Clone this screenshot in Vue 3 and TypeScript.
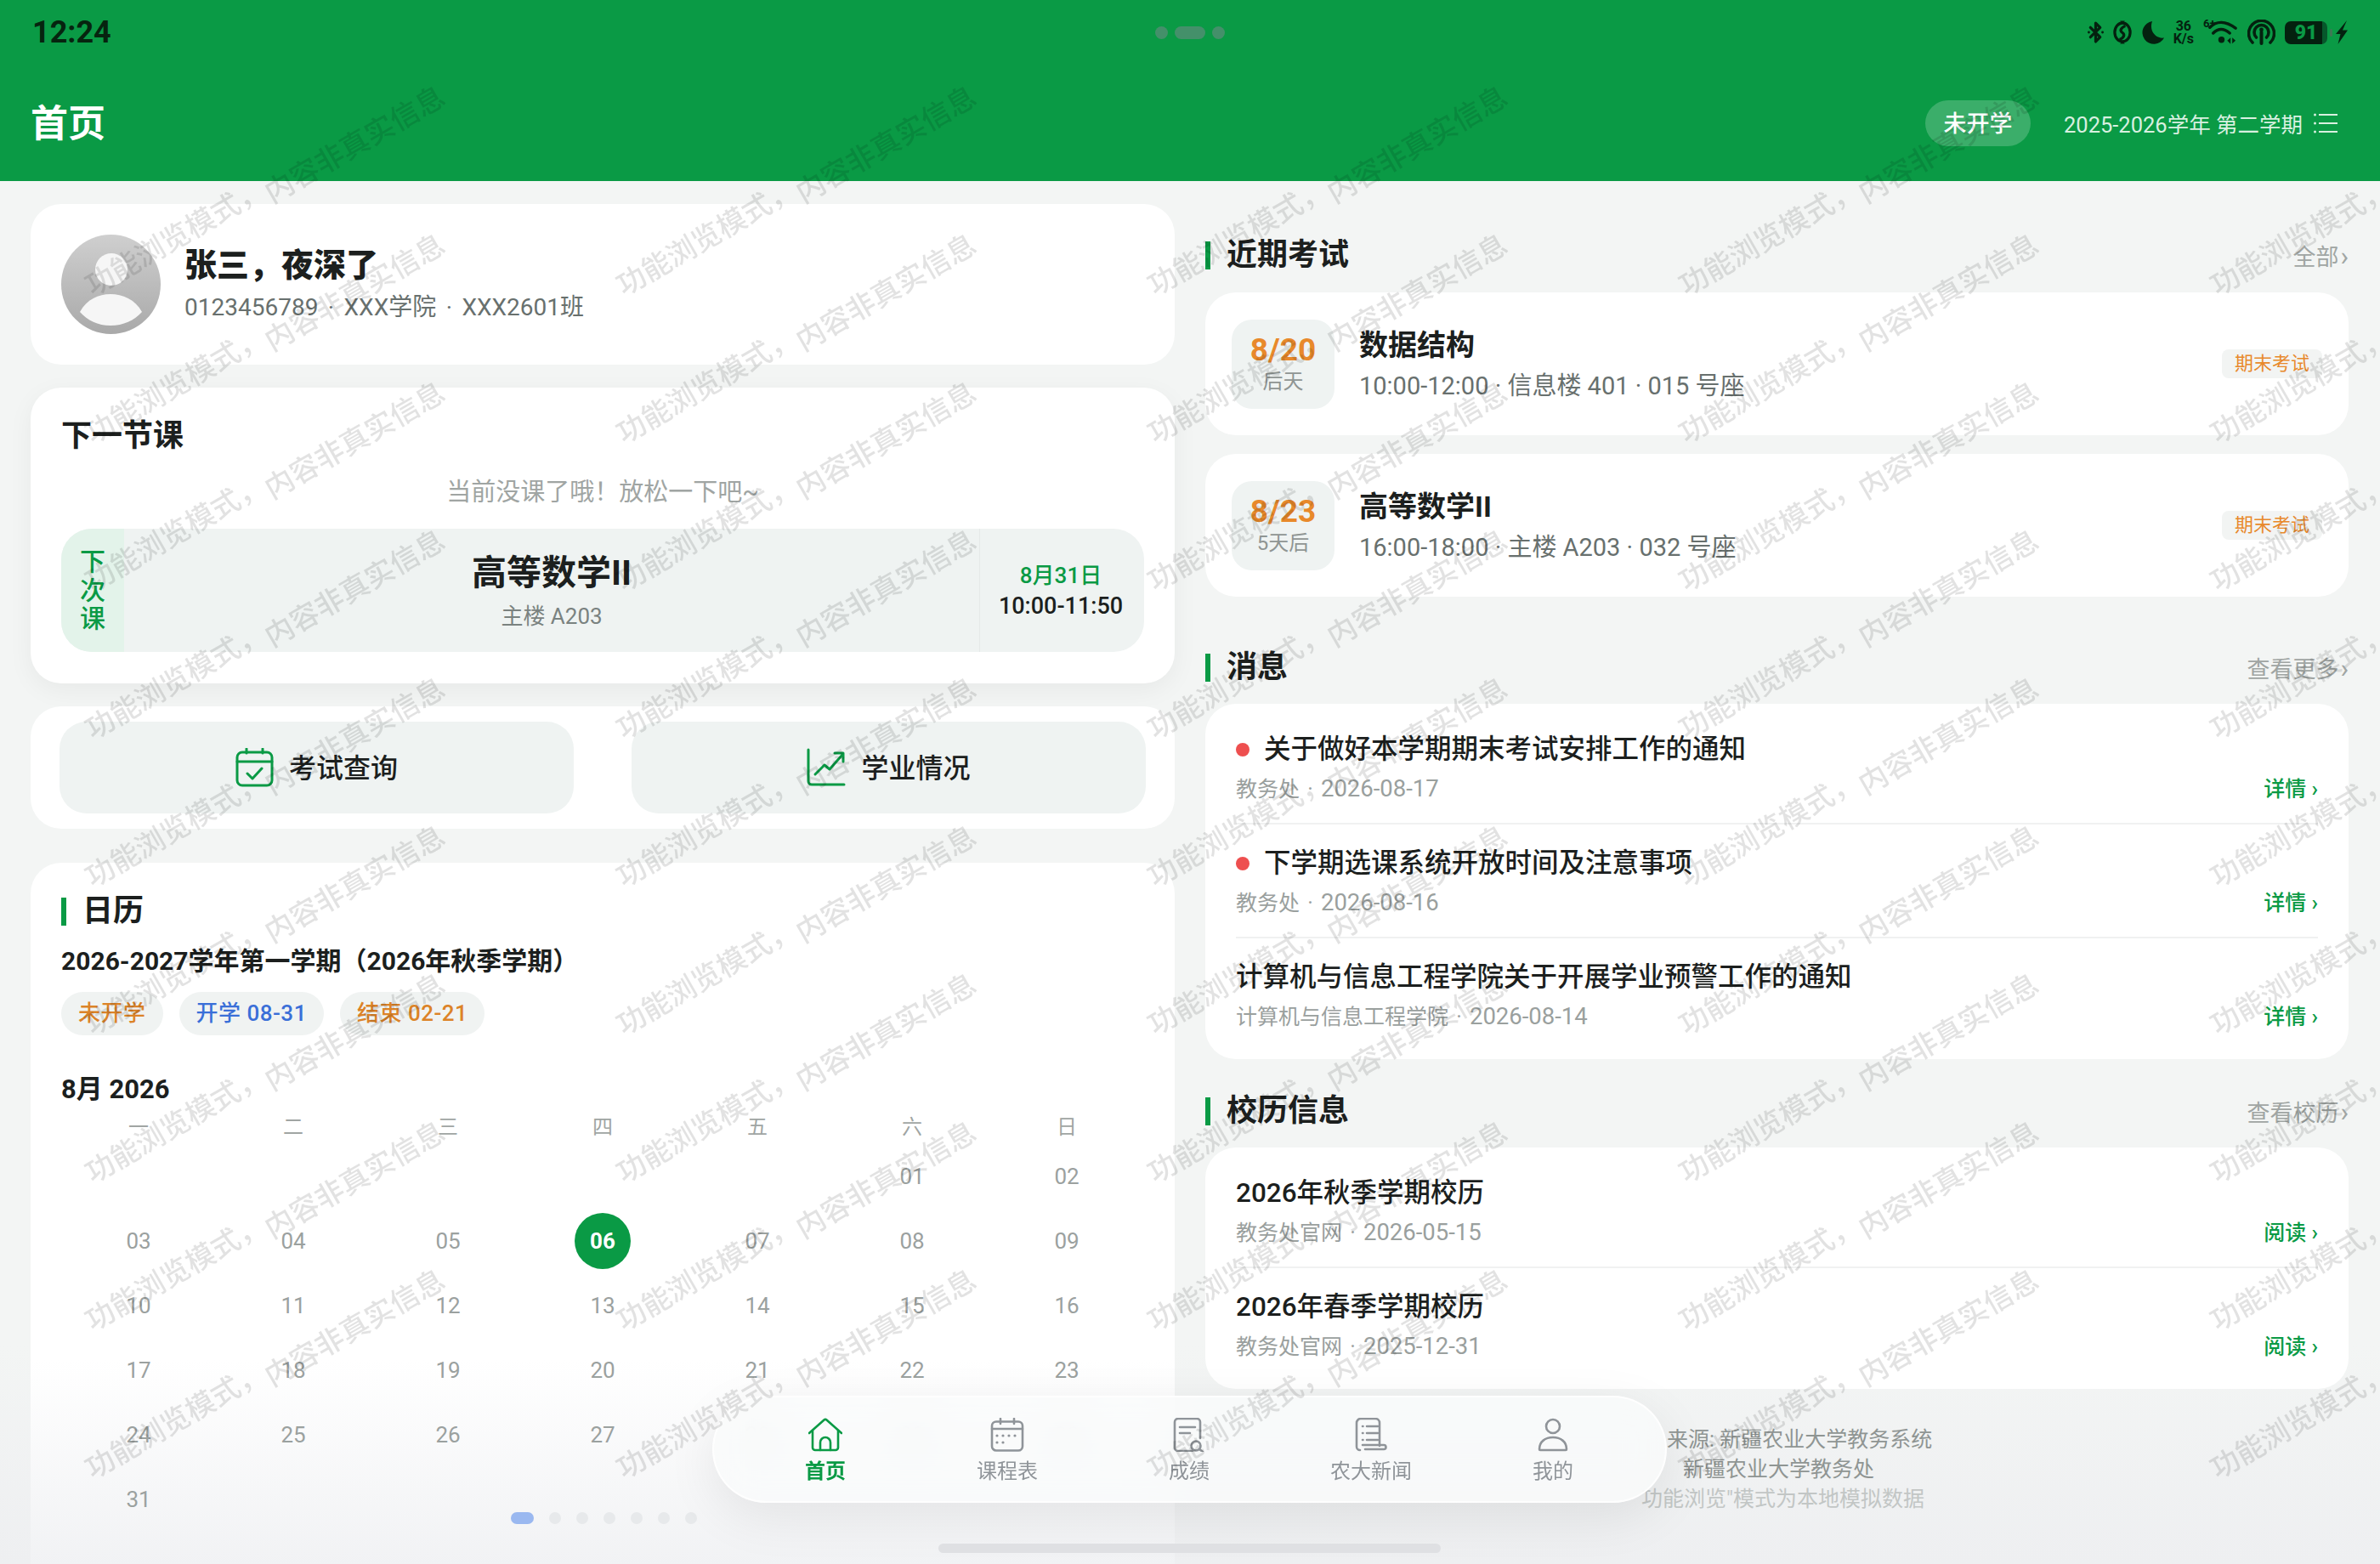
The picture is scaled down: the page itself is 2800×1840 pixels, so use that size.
<script setup lang="ts">
interface Exam {
  date: string
  left: string
  name: string
  info: string
}

interface Notice {
  title: string
  from: string
  date: string
  unread?: boolean
}

const exams: Exam[] = [
  { date: '8/20', left: '后天', name: '数据结构', info: '10:00-12:00 · 信息楼 401 · 015 号座' },
  { date: '8/23', left: '5天后', name: '高等数学II', info: '16:00-18:00 · 主楼 A203 · 032 号座' }
]

const notices: Notice[] = [
  { title: '关于做好本学期期末考试安排工作的通知', from: '教务处', date: '2026-08-17', unread: true },
  { title: '下学期选课系统开放时间及注意事项', from: '教务处', date: '2026-08-16', unread: true },
  { title: '计算机与信息工程学院关于开展学业预警工作的通知', from: '计算机与信息工程学院', date: '2026-08-14' }
]

const calendars: Notice[] = [
  { title: '2026年秋季学期校历', from: '教务处官网', date: '2026-05-15' },
  { title: '2026年春季学期校历', from: '教务处官网', date: '2025-12-31' }
]

const weekdays = ['一', '二', '三', '四', '五', '六', '日']

// 2026年8月从周六开始
const days: string[] = [
  ...Array(5).fill(''),
  ...Array.from({ length: 31 }, (_, i) => String(i + 1).padStart(2, '0'))
]

const tabs = ['首页', '课程表', '成绩', '农大新闻', '我的']
const dots = [0, 1, 2, 3, 4, 5, 6]
const watermarkCells = Array.from({ length: 45 }, (_, i) => i)
</script>

<template>
  <div class="page">
    <header class="top">
      <div class="status-bar">
        <span class="time">12:24</span>
        <div class="island">
          <i class="island-dot"></i>
          <i class="island-pill"></i>
          <i class="island-dot"></i>
        </div>
        <div class="status-icons">
          <svg width="19" height="28" viewBox="0 0 20 28" fill="none" stroke="#04210f" stroke-width="3.4" stroke-linejoin="round" stroke-linecap="round">
            <path d="M3.5 8 15.5 20 10 25.500V2.500L15.500 8 3.500 20" />
            <circle cx="1.500" cy="14" r="1.500" fill="#04210f" stroke="none" />
            <circle cx="18.500" cy="14" r="1.500" fill="#04210f" stroke="none" />
          </svg>
          <svg width="22" height="32" viewBox="0 0 23 32" fill="none" stroke="#04210f" stroke-width="3.400">
            <ellipse cx="11.500" cy="16" rx="9.500" ry="11.500" />
            <path d="M15 8c-6 3-7 6-3.500 8.500S13 23 8 25" />
            <path d="M8.500 2h6l-3 3zM8.500 30h6l-3-3z" fill="#04210f" stroke="none" />
          </svg>
          <svg width="27" height="28" viewBox="0 0 27 28">
            <path d="M13 1a13.500 13.500 0 1 0 14 19.500C17 22 9 12 13 1Z" fill="#04210f" />
          </svg>
          <div class="net-speed"><span>36</span><span>K/s</span></div>
          <div class="wifi">
            <span class="wifi-tag">6+</span>
            <svg width="41" height="30" viewBox="0 0 42 30" fill="none" stroke="#04210f" stroke-width="3.600" stroke-linecap="round">
              <path d="M8 9C16 1 27 1 39 10" />
              <path d="M12 16c6-6 13-6 20 0" />
              <circle cx="22" cy="24" r="3.800" fill="#04210f" stroke="none" />
              <path d="M29 25l4-3.500V29zM35 21.500 39 25l-4 3.500z" fill="#04210f" stroke="none" />
            </svg>
          </div>
          <svg width="33" height="31" viewBox="0 0 33 31" fill="none" stroke="#04210f" stroke-width="3.600" stroke-linecap="round">
            <path d="M6 27A15 15 0 1 1 27 27" />
            <path d="M10.500 21a8.500 8.500 0 1 1 12 0" />
            <path d="M16.500 15v13" stroke-width="4" />
            <circle cx="16.500" cy="12" r="2.400" fill="#04210f" stroke="none" />
          </svg>
          <div class="battery">
            <div class="battery-body">91</div>
            <i class="battery-tip"></i>
          </div>
          <svg class="bolt" width="14" height="28" viewBox="0 0 14 28">
            <path d="M13 0 0 16h5.500L2.500 28 14 11.500H8Z" fill="#04210f" />
          </svg>
        </div>
      </div>
      <div class="title-row">
        <h1 class="page-title">首页</h1>
        <span class="term-state">未开学</span>
        <span class="term-name">2025-2026学年 第二学期</span>
        <svg class="term-icon" width="28" height="24" viewBox="0 0 28 24" fill="none" stroke="#d8f0e0" stroke-width="2">
          <path d="M6 2h22M6 12h22M6 22h22" />
          <circle cx="1.500" cy="2" r="1.500" fill="#d8f0e0" stroke="none" />
          <circle cx="1.500" cy="12" r="1.500" fill="#d8f0e0" stroke="none" />
          <circle cx="1.500" cy="22" r="1.500" fill="#d8f0e0" stroke="none" />
        </svg>
      </div>
    </header>

    <main class="body">
      <section class="col-left">
        <div class="card user-card">
          <svg class="avatar" width="117" height="117" viewBox="0 0 117 117">
            <defs>
              <linearGradient id="avatarBg" x1="0" y1="0" x2="0" y2="1">
                <stop offset="0" stop-color="#cfcfcf" />
                <stop offset="1" stop-color="#a9a9a9" />
              </linearGradient>
              <clipPath id="avatarClip">
                <circle cx="58.500" cy="58.500" r="58.500" />
              </clipPath>
            </defs>
            <circle cx="58.500" cy="58.500" r="58.500" fill="url(#avatarBg)" />
            <circle cx="59" cy="41" r="19" fill="#f6f6f6" />
            <path d="M22 91c8-15 22-21 36-21s29 6 37 21c-9 10-22 16-37 16S31 101 22 91Z" fill="#f6f6f6" clip-path="url(#avatarClip)" />
          </svg>
          <div>
            <div class="user-name">张三，夜深了</div>
            <div class="user-meta">0123456789 · XXX学院 · XXX2601班</div>
          </div>
        </div>

        <div class="card next-card">
          <h2 class="next-title">下一节课</h2>
          <p class="next-tip">当前没课了哦！放松一下吧~</p>
          <div class="next-box">
            <div class="next-label"><span>下</span><span>次</span><span>课</span></div>
            <div class="next-course">
              <div class="next-name">高等数学II</div>
              <div class="next-room">主楼 A203</div>
            </div>
            <div class="next-time">
              <div class="next-date">8月31日</div>
              <div class="next-hour">10:00-11:50</div>
            </div>
          </div>
        </div>

        <div class="card action-card">
          <div class="action-btn">
            <svg width="45" height="46" viewBox="0 0 45 46" fill="none" stroke="#0a9a45" stroke-width="3" stroke-linecap="round" stroke-linejoin="round">
              <rect x="2" y="5" width="41" height="39" rx="6" />
              <path d="M2 16h41M13 1v5M32 1v5M14 30l6 6 11-12" />
            </svg>
            <span>考试查询</span>
          </div>
          <div class="action-btn">
            <svg width="46" height="46" viewBox="0 0 46 46" fill="none" stroke="#0a9a45" stroke-width="3" stroke-linecap="round" stroke-linejoin="round">
              <path d="M2 2v37a4 4 0 0 0 4 4h38" />
              <path d="M10 31l11-11 6 5 15-17" />
              <path d="M33 6h10v10" />
            </svg>
            <span>学业情况</span>
          </div>
        </div>

        <div class="card calendar-card">
          <div class="sec-head">
            <h2 class="sec-title">日历</h2>
          </div>
          <div class="term-line">2026-2027学年第一学期（2026年秋季学期）</div>
          <div class="chips">
            <span class="chip orange">未开学</span>
            <span class="chip blue">开学 08-31</span>
            <span class="chip orange">结束 02-21</span>
          </div>
          <div class="month">8月 2026</div>
          <div class="week-row">
            <span v-for="w in weekdays" :key="w">{{ w }}</span>
          </div>
          <div class="day-grid">
            <div v-for="(d, i) in days" :key="i" class="day" :class="{ today: d === '06' }">
              <span>{{ d }}</span>
            </div>
          </div>
        </div>
      </section>

      <section class="col-right">
        <div class="sec-head">
          <h2 class="sec-title">近期考试</h2>
          <span class="more">全部<em>›</em></span>
        </div>
        <div class="exam-list">
          <div v-for="e in exams" :key="e.date" class="card exam-card">
            <div class="exam-date">
              <strong>{{ e.date }}</strong>
              <span>{{ e.left }}</span>
            </div>
            <div class="exam-text">
              <div class="exam-name">{{ e.name }}</div>
              <div class="exam-info">{{ e.info }}</div>
            </div>
            <span class="exam-tag">期末考试</span>
          </div>
        </div>

        <div class="sec-head sec-messages">
          <h2 class="sec-title">消息</h2>
          <span class="more">查看更多<em>›</em></span>
        </div>
        <div class="card list-card">
          <div v-for="n in notices" :key="n.title" class="list-item">
            <div class="list-title"><i v-if="n.unread" class="red-dot"></i>{{ n.title }}</div>
            <div class="list-bottom">
              <span class="list-meta">{{ n.from }} <b>·</b> <span class="list-date">{{ n.date }}</span></span>
              <span class="list-link">详情 <em>›</em></span>
            </div>
          </div>
        </div>

        <div class="sec-head sec-calendar">
          <h2 class="sec-title">校历信息</h2>
          <span class="more">查看校历<em>›</em></span>
        </div>
        <div class="card list-card">
          <div v-for="n in calendars" :key="n.title" class="list-item">
            <div class="list-title">{{ n.title }}</div>
            <div class="list-bottom">
              <span class="list-meta">{{ n.from }} <b>·</b> <span class="list-date">{{ n.date }}</span></span>
              <span class="list-link">阅读 <em>›</em></span>
            </div>
          </div>
        </div>

        <div class="source">
          <div class="source-a">来源: 新疆农业大学教务系统</div>
          <div class="source-b">新疆农业大学教务处</div>
          <div class="source-c">功能浏览"模式为本地模拟数据</div>
        </div>
      </section>
    </main>

    <div class="pager">
      <i v-for="d in dots" :key="d" :class="{ on: d === 0 }"></i>
    </div>

    <nav class="tabbar">
      <div v-for="(t, i) in tabs" :key="t" class="tab" :class="{ active: i === 0 }">
        <svg width="40" height="40" viewBox="0 0 40 40" fill="none" stroke="currentColor" stroke-width="2.600" stroke-linecap="round" stroke-linejoin="round">
          <template v-if="i === 0">
            <path d="M1 18 18.500 2.500a2.300 2.300 0 0 1 3 0L39 18" />
            <path d="M5 15v20a3 3 0 0 0 3 3h24a3 3 0 0 0 3-3V15" />
            <path d="M14 38v-9a6 6 0 0 1 12 0v9" />
          </template>
          <template v-else-if="i === 1">
            <rect x="2" y="4.500" width="36" height="34" rx="5" />
            <path d="M2 13h36M12 1v6M28 1v6" />
            <g fill="currentColor" stroke="none">
              <circle cx="8" cy="21" r="1.600" /><circle cx="15" cy="21" r="1.600" /><circle cx="22" cy="21" r="1.600" /><circle cx="29" cy="21" r="1.600" />
              <circle cx="8" cy="29" r="1.600" /><circle cx="15" cy="29" r="1.600" />
            </g>
          </template>
          <template v-else-if="i === 2">
            <path d="M24 39H7a4 4 0 0 1-4-4V5a4 4 0 0 1 4-4h22a4 4 0 0 1 4 4v19" />
            <path d="M9 11h18M9 18h12" />
            <circle cx="28" cy="33" r="5.500" />
            <path d="M32 37l4 3" />
          </template>
          <template v-else-if="i === 3">
            <path d="M7 38a4 4 0 0 1-4-4V6a5 5 0 0 1 5-5h17a5 5 0 0 1 5 5v27" />
            <path d="M13 37h22a2.500 2.500 0 0 0 0-5H10" />
            <path d="M15 10h13M15 18h13M15 26h13" />
            <path d="M10 10h.5M10 18h.5M10 26h.5" />
          </template>
          <template v-else>
            <circle cx="20" cy="10" r="8" />
            <path d="M4 37c0-9 7-14 16-14s16 5 16 14c0 .6-.4 1-1 1H5c-.6 0-1-.4-1-1Z" />
          </template>
        </svg>
        <span>{{ t }}</span>
      </div>
    </nav>

    <div class="home-bar"></div>

    <!-- 水印 -->
    <div class="watermark">
      <div v-for="c in watermarkCells" :key="c" class="wm-cell">
        <span class="wm-a">功能浏览模式，</span>
        <span class="wm-b">内容非真实信息</span>
      </div>
    </div>
  </div>
</template>

<style>
html,
body {
  margin: 0;
  background: #f3f5f4;
}
</style>

<style scoped>
.page {
  position: relative;
  width: 2800px;
  height: 1840px;
  overflow: hidden;
  background: linear-gradient(to bottom, #f3f5f4 86%, #eeeff1 100%);
  color: #1c1f1e;
  font-family: Roboto, "Noto Sans CJK SC", sans-serif;
}

h1,
h2,
p {
  margin: 0;
}

em {
  font-style: normal;
}

.top {
  height: 213px;
  background: #0a9a45;
}

.status-bar {
  display: grid;
  grid-template-columns: 1fr auto 1fr;
  align-items: center;
  height: 76px;
  padding: 0 38px;
}

.time {
  font-size: 36px;
  font-weight: 700;
  color: #06240f;
}

.island {
  display: flex;
  align-items: center;
  gap: 8px;
}

.island-dot {
  width: 15px;
  height: 15px;
  border-radius: 50%;
  background: #44906a;
}

.island-pill {
  width: 36px;
  height: 15px;
  border-radius: 8px;
  background: #44906a;
}

.status-icons {
  display: flex;
  justify-content: flex-end;
  align-items: center;
  gap: 11px;
}

.bolt {
  margin-left: -7px;
}

.net-speed {
  display: flex;
  flex-direction: column;
  align-items: center;
  font-size: 16px;
  line-height: 15px;
  font-weight: 700;
  color: #04210f;
}

.wifi {
  position: relative;
  display: flex;
}

.wifi-tag {
  position: absolute;
  left: 0;
  top: -2px;
  font-size: 13px;
  line-height: 14px;
  font-weight: 700;
  color: #04210f;
}

.battery {
  display: flex;
  align-items: center;
  gap: 3px;
}

.battery-body {
  width: 50px;
  height: 27px;
  border-radius: 7px;
  background: linear-gradient(to right, #04210f 88%, #06582b 88%);
  color: #0a9a45;
  font-size: 23px;
  line-height: 27px;
  font-weight: 900;
  text-align: center;
}

.battery-tip {
  width: 3px;
  height: 9px;
  border-radius: 2px;
  background: #3d7a55;
}

.title-row {
  display: flex;
  align-items: center;
  height: 137px;
  padding: 0 50px 0 36px;
}

.page-title {
  font-size: 44px;
  font-weight: 700;
  color: #fff;
  margin-right: auto;
  padding-bottom: 5px;
}

.term-state {
  width: 124px;
  height: 54px;
  border-radius: 27px;
  background: rgba(255, 255, 255, 0.2);
  color: #fff;
  font-size: 27px;
  font-weight: 500;
  line-height: 56px;
  text-align: center;
  margin-right: 39px;
}

.term-name {
  font-size: 25.500px;
  color: #d8f0e0;
  margin-right: 13px;
}

.body {
  display: grid;
  grid-template-columns: 1346px 1345px;
  column-gap: 36px;
  padding-left: 36px;
}

.card {
  background: #fff;
  border-radius: 36px;
}

.col-left {
  padding-top: 27px;
  display: flex;
  flex-direction: column;
}

.user-card {
  display: flex;
  align-items: center;
  gap: 28px;
  height: 189px;
  padding: 0 36px;
  box-sizing: border-box;
}

.user-name {
  font-size: 38px;
  font-weight: 900;
  line-height: 48px;
}

.user-meta {
  font-size: 28px;
  line-height: 40px;
  margin-top: 6px;
  word-spacing: 4.500px;
  color: #68706e;
}

.next-card {
  height: 348px;
  margin-top: 27px;
  padding: 38px 36px 0;
  box-sizing: border-box;
  box-shadow: 0 8px 30px rgba(0, 0, 0, 0.05);
}

.next-title {
  font-size: 36px;
  font-weight: 700;
  line-height: 38px;
}

.next-tip {
  margin-top: 27px;
  text-align: center;
  font-size: 29px;
  line-height: 40px;
  color: #a0a5a3;
}

.next-box {
  display: flex;
  height: 145px;
  margin-top: 23px;
  border-radius: 36px;
  background: #eff3f2;
  overflow: hidden;
}

.next-label {
  width: 74px;
  display: flex;
  flex-direction: column;
  align-items: center;
  justify-content: center;
  background: #e3f3ea;
  color: #0a9a45;
  font-size: 30px;
  font-weight: 500;
  line-height: 33.500px;
}

.next-course {
  flex: 1;
  text-align: center;
  padding-top: 24px;
}

.next-name {
  font-size: 41px;
  font-weight: 700;
  line-height: 56px;
}

.next-room {
  margin-top: 5px;
  font-size: 26px;
  line-height: 36px;
  color: #7a8280;
}

.next-time {
  width: 190px;
  padding: 37px 3px 0 0;
  border-left: 1px solid #e5e9e8;
  text-align: center;
  font-size: 26px;
  font-weight: 500;
  line-height: 36px;
}

.next-date {
  color: #0a9a45;
}

.next-hour {
  font-size: 27px;
}

.action-card {
  display: flex;
  gap: 68px;
  height: 144px;
  margin-top: 27px;
  padding: 18px 34px;
  box-sizing: border-box;
}

.action-btn {
  flex: 1;
  display: flex;
  align-items: center;
  justify-content: center;
  gap: 18px;
  border-radius: 32px;
  background: #eff3f2;
  font-size: 32px;
  font-weight: 500;
}

.action-btn span {
  padding-bottom: 4px;
}

.calendar-card {
  margin-top: 40px;
  height: 900px;
  padding: 41px 36px;
  box-sizing: border-box;
  background: linear-gradient(to bottom, #fff 65%, #f1f2f4 92%);
}

.sec-head {
  display: flex;
  align-items: center;
  justify-content: space-between;
  height: 33px;
}

.sec-title {
  position: relative;
  padding-left: 25px;
  font-size: 36px;
  font-weight: 700;
  line-height: 33px;
}

.sec-title::before {
  content: '';
  position: absolute;
  left: 0;
  top: 0;
  width: 6px;
  height: 33px;
  background: #0a9a45;
}

.more {
  font-size: 27px;
  color: #a0a5a3;
}

.more em {
  margin-left: 2px;
  font-size: 32px;
  line-height: 26px;
}

.term-line {
  margin-top: 22px;
  font-size: 30px;
  font-weight: 700;
  line-height: 40px;
}

.chips {
  display: flex;
  gap: 19px;
  margin-top: 16px;
}

.chip {
  height: 51px;
  padding: 0 20px;
  border-radius: 26px;
  background: #f0f3f2;
  font-size: 26px;
  font-weight: 500;
  line-height: 51px;
  letter-spacing: 0.500px;
}

.orange {
  color: #dc8328;
}

.blue {
  color: #3a6fd8;
}

.month {
  margin-top: 44px;
  font-size: 31px;
  font-weight: 700;
  line-height: 40px;
}

.week-row,
.day-grid {
  display: grid;
  grid-template-columns: repeat(7, 182px);
}

.week-row {
  margin-top: 4px;
  font-size: 24px;
  line-height: 40px;
  text-align: center;
  color: #a0a5a3;
}

.day {
  display: flex;
  align-items: center;
  justify-content: center;
  height: 76px;
  font-size: 26px;
  color: #9ba19f;
}

.day.today span {
  width: 66px;
  height: 66px;
  border-radius: 50%;
  background: #0a9a45;
  color: #fff;
  font-weight: 700;
  line-height: 66px;
  text-align: center;
}

.col-right {
  padding-top: 71px;
}

.exam-list {
  display: flex;
  flex-direction: column;
  gap: 22px;
  margin-top: 27px;
}

.exam-card {
  display: flex;
  align-items: center;
  height: 168px;
  padding: 0 31px;
}

.exam-date {
  display: flex;
  flex-direction: column;
  align-items: center;
  justify-content: center;
  width: 121px;
  height: 105px;
  border-radius: 24px;
  background: #eff3f2;
}

.exam-date strong {
  font-size: 37px;
  line-height: 42px;
  font-weight: 700;
  color: #e8892b;
}

.exam-date span {
  font-size: 24px;
  line-height: 32px;
  color: #8f9593;
}

.exam-text {
  margin-left: 29px;
  padding-top: 2px;
}

.exam-name {
  font-size: 34px;
  font-weight: 700;
  line-height: 46px;
}

.exam-info {
  margin-top: 4px;
  font-size: 29px;
  line-height: 42px;
  color: #68706e;
}

.exam-tag {
  margin-left: auto;
  padding: 0 15px;
  height: 34px;
  border-radius: 8px;
  background: #f2f4f3;
  color: #e8892b;
  font-size: 22px;
  line-height: 34px;
}

.sec-messages {
  margin-top: 67px;
}

.sec-calendar {
  margin-top: 45px;
}

.list-card {
  margin-top: 26px;
  padding: 8px 36px;
}

.list-item {
  padding: 26px 0 22px;
  border-bottom: 2px solid #f0f1f1;
}

.list-item:last-child {
  border-bottom-color: transparent;
}

.list-title {
  display: flex;
  align-items: center;
  font-size: 31.500px;
  font-weight: 500;
  line-height: 40px;
}

.red-dot {
  width: 16px;
  height: 16px;
  border-radius: 50%;
  margin-right: 17px;
  background: #ee4f4f;
}

.list-bottom {
  display: flex;
  justify-content: space-between;
  align-items: center;
  margin-top: 4px;
  height: 40px;
}

.list-meta {
  font-size: 25px;
  color: #9aa09e;
  word-spacing: 3px;
}

.list-meta b {
  font-weight: 400;
}

.list-date {
  font-size: 27.500px;
}

.list-link {
  font-size: 25px;
  font-weight: 500;
  color: #0a9a45;
}

.source {
  margin-top: 42px;
  margin-left: 513px;
  font-size: 25px;
  line-height: 35px;
  color: #8f9593;
}

.source-a {
  margin-left: 30px;
}

.source-b {
  margin-left: 49px;
}

.source-c {
  color: #c2c6c5;
}

.pager {
  position: absolute;
  left: 601px;
  top: 1779px;
  display: flex;
  align-items: center;
  gap: 18px;
}

.pager i {
  width: 14px;
  height: 14px;
  border-radius: 50%;
  background: #e7e9eb;
}

.pager i.on {
  width: 27px;
  border-radius: 7px;
  background: #9ab8f0;
}

.tabbar {
  position: absolute;
  left: 838px;
  top: 1642px;
  box-sizing: border-box;
  width: 1123px;
  height: 126px;
  padding: 0 25px 0 24px;
  display: flex;
  border: 2px solid rgba(255, 255, 255, 0.9);
  border-radius: 63px;
  background: rgba(250, 251, 251, 0.78);
  backdrop-filter: blur(24px);
  box-shadow: 0 16px 60px rgba(0, 0, 0, 0.08);
}

.tab {
  flex: 1;
  display: flex;
  flex-direction: column;
  align-items: center;
  padding-top: 24px;
  color: #8f9499;
  font-size: 24px;
  line-height: 34px;
}

.tab span {
  margin-top: 6px;
}

.tab.active {
  color: #0a9a45;
  font-weight: 700;
}

.home-bar {
  position: absolute;
  left: 1104px;
  top: 1816px;
  width: 591px;
  height: 11px;
  border-radius: 6px;
  background: #dfe0e3;
}

.watermark {
  position: absolute;
  inset: 0;
  padding-top: 103px;
  display: grid;
  grid-template-columns: repeat(5, 625px);
  grid-auto-rows: 174px;
  pointer-events: none;
}

.wm-cell {
  position: relative;
}

.wm-a,
.wm-b {
  position: absolute;
  transform: translate(-50%, -50%) rotate(-30deg);
  white-space: nowrap;
  font-size: 34px;
  font-weight: 500;
  color: rgba(0, 0, 0, 0.115);
}

.wm-a {
  left: 205px;
  top: 174px;
}

.wm-b {
  left: 416px;
  top: 65px;
}
</style>
